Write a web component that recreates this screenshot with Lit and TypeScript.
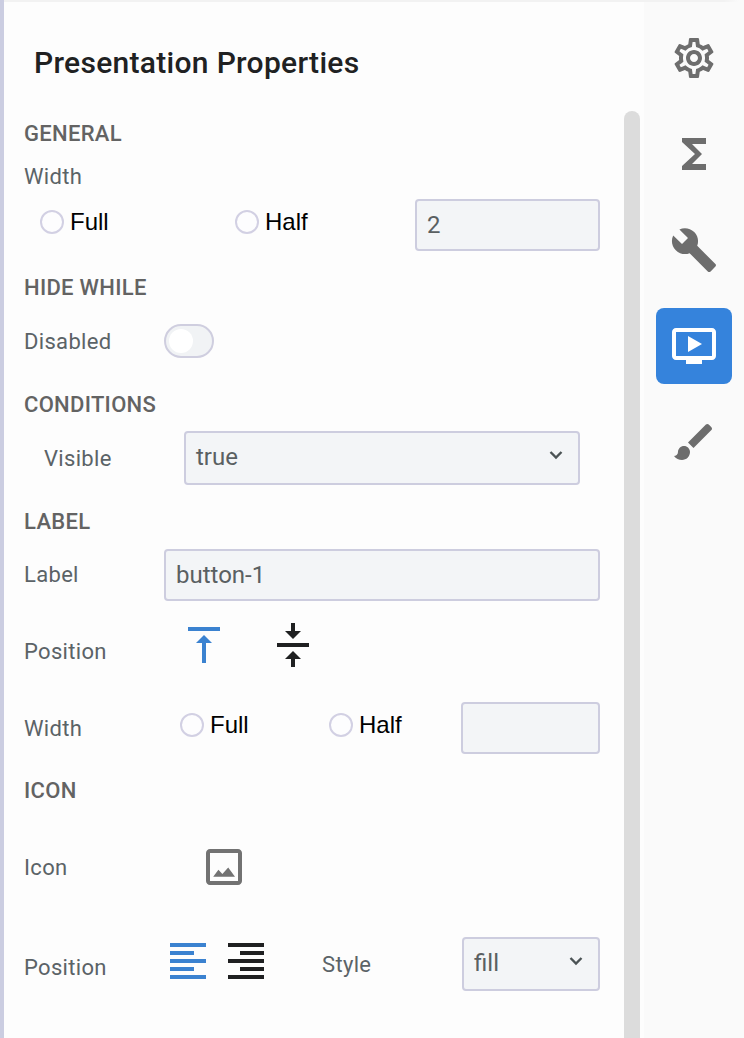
import { LitElement, html, css, svg } from "lit";
import { customElement, property } from "lit/decorators.js";

const ICONS: Record<string, string> = {
  settings:
    "M19.43 12.98c.04-.32.07-.64.07-.98 0-.34-.03-.66-.07-.98l2.11-1.65c.19-.15.24-.42.12-.64l-2-3.46c-.09-.16-.26-.25-.44-.25-.06 0-.12.01-.17.03l-2.49 1c-.52-.4-1.08-.73-1.69-.98l-.38-2.65C14.46 2.18 14.25 2 14 2h-4c-.25 0-.46.18-.49.42l-.38 2.65c-.61.25-1.17.59-1.69.98l-2.49-1c-.06-.02-.12-.03-.18-.03-.17 0-.34.09-.43.25l-2 3.46c-.13.22-.07.49.12.64l2.11 1.65c-.04.32-.07.65-.07.98 0 .33.03.66.07.98l-2.11 1.65c-.19.15-.24.42-.12.64l2 3.46c.09.16.26.25.44.25.06 0 .12-.01.17-.03l2.49-1c.52.4 1.08.73 1.69.98l.38 2.65c.03.24.24.42.49.42h4c.25 0 .46-.18.49-.42l.38-2.65c.61-.25 1.17-.59 1.69-.98l2.49 1c.06.02.12.03.18.03.17 0 .34-.09.43-.25l2-3.46c.12-.22.07-.49-.12-.64l-2.11-1.65zm-1.98-1.71c.04.31.05.52.05.73 0 .21-.02.43-.05.73l-.14 1.13.89.7 1.08.84-.7 1.21-1.27-.51-1.04-.42-.9.68c-.43.32-.84.56-1.25.73l-1.06.43-.16 1.13-.2 1.35h-1.4l-.19-1.35-.16-1.13-1.06-.43c-.43-.18-.83-.41-1.23-.71l-.91-.7-1.06.43-1.27.51-.7-1.21 1.08-.84.89-.7-.14-1.13c-.03-.31-.05-.54-.05-.74s.02-.43.05-.73l.14-1.13-.89-.7-1.08-.84.7-1.21 1.27.51 1.04.42.9-.68c.43-.32.84-.56 1.25-.73l1.06-.43.16-1.13.2-1.35h1.39l.19 1.35.16 1.13 1.06.43c.43.18.83.41 1.23.71l.91.7 1.06-.43 1.27-.51.7 1.21-1.07.85-.89.7.14 1.13zM12 8c-2.21 0-4 1.79-4 4s1.79 4 4 4 4-1.79 4-4-1.79-4-4-4zm0 6c-1.1 0-2-.9-2-2s.9-2 2-2 2 .9 2 2-.9 2-2 2z",
  functions: "M18 4H6v2l6.5 6L6 18v2h12v-3h-7l5-5-5-5h7z",
  build:
    "M22.7 19l-9.1-9.1c.9-2.3.4-5-1.5-6.9-2-2-5-2.4-7.4-1.3L9 6 6 9 1.6 4.7C.4 7.1.9 10.1 2.9 12.1c1.9 1.9 4.6 2.4 6.9 1.5l9.1 9.1c.4.4 1 .4 1.4 0l2.3-2.3c.5-.4.5-1.1.1-1.4z",
  video:
    "M21 3H3c-1.11 0-2 .89-2 2v12c0 1.1.89 2 2 2h5v2h8v-2h5c1.1 0 1.99-.9 1.99-2L23 5c0-1.11-.9-2-2-2zm0 14H3V5h18v12zm-5-6l-7 4V7z",
  brush:
    "M7 14c-1.66 0-3 1.34-3 3 0 1.31-1.16 2-2 2 .92 1.22 2.49 2 4 2 2.21 0 4-1.79 4-4 0-1.66-1.34-3-3-3zm13.71-9.37l-1.34-1.34c-.39-.39-1.02-.39-1.41 0L9 12.25 11.75 15l8.96-8.96c.39-.39.39-1.02 0-1.41z",
  alignTop: "M8 11h3v10h2V11h3l-4-4-4 4zM4 3v2h16V3H4z",
  alignCenter:
    "M8 19h3v4h2v-4h3l-4-4-4 4zm8-14h-3V1h-2v4H8l4 4 4-4zM4 11v2h16v-2H4z",
  picture:
    "M19 5v14H5V5h14m0-2H5c-1.1 0-2 .9-2 2v14c0 1.1.9 2 2 2h14c1.1 0 2-.9 2-2V5c0-1.1-.9-2-2-2zM6.6 16.9l2.6-3.5 2 2.1 2.9-3.3 3.4 4.7z",
  left: "M15 15H3v2h12v-2zm0-8H3v2h12V7zM3 13h18v-2H3v2zm0 8h18v-2H3v2zM3 3v2h18V3H3z",
  right: "M3 21h18v-2H3v2zm6-4h12v-2H9v2zm-6-4h18v-2H3v2zm6-4h12V7H9v2zM3 3v2h18V3H3z",
};

@customElement("ui-icon")
class UiIcon extends LitElement {
  @property() name = "";
  static styles = css`
    :host { display: block; width: 48px; height: 48px; flex: none; }
    svg { display: block; width: 100%; height: 100%; fill: currentColor; }
  `;
  render() {
    return html`<svg viewBox="0 0 24 24">${svg`<path d=${ICONS[this.name]}></path>`}</svg>`;
  }
}

@customElement("ui-radio")
class UiRadio extends LitElement {
  @property() label = "";
  static styles = css`
    :host {
      display: flex; align-items: center; gap: 6px; height: 28px;
      font: 24px/28px "Liberation Sans", Arial, sans-serif; color: #000;
    }
    .ring {
      box-sizing: border-box; width: 24px; height: 24px;
      border: 2px solid #d2d0e3; border-radius: 50%; background: #fdfdfe;
    }
  `;
  render() {
    return html`<span class="ring"></span><span>${this.label}</span>`;
  }
}

@customElement("ui-field")
class UiField extends LitElement {
  @property() value = "";
  @property({ type: Boolean }) dropdown = false;
  static styles = css`
    :host {
      box-sizing: border-box; display: flex; align-items: center;
      justify-content: space-between; height: 52px; padding: 0 10px;
      border: 2px solid #cdcddf; border-radius: 4px; background: #f3f5f7;
      font: 24px/28px Roboto, sans-serif; color: #5a6062;
    }
    :host([dropdown]) { height: 54px; padding: 0 15px 2px 10px; }
    .chevron {
      width: 14px; height: 10px; margin-top: -4px; fill: none;
      stroke: #4b5355; stroke-width: 2.4;
    }
  `;
  render() {
    return html`<span>${this.value}</span>${this.dropdown
        ? html`<svg class="chevron" viewBox="0 0 14 10"><path d="M1.5 2l5.5 5.5L12.5 2"></path></svg>`
        : ""}`;
  }
}

@customElement("app-root")
class AppRoot extends LitElement {
  static styles = css`
    :host {
      box-sizing: border-box; display: grid;
      grid-template-columns: 620px 16px 4px 1fr; grid-template-rows: 2px 1fr;
      height: 1038px; overflow: hidden; background: #fdfdfd;
      border-left: 4px solid #cbcde1; font-family: Roboto, sans-serif;
    }
    .edge { grid-column: 1 / -1; background: linear-gradient(90deg, #f2f2f2 720px, #fafafa 735px); }
    .panel { padding: 0 24px 0 20px; }
    .title {
      margin: 41px 0 0 10px; font-size: 30px; line-height: 40px;
      font-weight: 500; letter-spacing: 0.3px; color: #202122;
    }
    .heading {
      margin: 0; font-size: 22px; line-height: 26px; font-weight: 500;
      letter-spacing: 0.3px; color: #636363;
    }
    .general { margin-top: 38px; }
    .hide { margin-top: 24px; }
    .conditions { margin-top: 34px; }
    .labels { margin-top: 24px; }
    .icons { margin-top: 24px; }
    .row { display: grid; align-items: center; grid-template-columns: 140px 1fr; }
    .label {
      padding-top: 2px; font-size: 22px; line-height: 26px;
      letter-spacing: 0.32px; color: #5b6367;
    }
    .widthlabel { margin-top: 15px; }
    .widths { margin-top: 9px; padding-left: 16px; grid-template-columns: 195px 180px 1fr; }
    .widths ui-radio, .labelwidth ui-radio { margin-top: -6px; }
    .disabled { margin-top: 23px; height: 34px; }
    .toggle {
      box-sizing: border-box; display: flex; align-items: center; width: 50px; height: 34px;
      padding-left: 3px; border: 2px solid #cfcedf; border-radius: 17px; background: #f1f3f5;
    }
    .knob { width: 24px; height: 24px; border-radius: 50%; background: #fff; }
    .visible { margin: 13px 20px 0 20px; }
    .labeltext { margin-top: 14px; }
    .labeltext .label { padding-top: 0; }
    .position { margin-top: 20px; height: 48px; grid-template-columns: 156px 89px 48px; }
    .position .label { margin-top: 12px; }
    .labelwidth { margin-top: 33px; grid-template-columns: 156px 149px 132px 1fr; }
    .iconrow { margin-top: 39px; grid-template-columns: 176px 48px; }
    .align { margin-top: 46px; height: 54px; grid-template-columns: 140px 58px 100px 140px 1fr; }
    .align .label { margin-top: 5px; }
    .align ui-icon { margin-bottom: 6px; }
    .align .style { margin-top: 0; }
    .on { color: #3b82d0; }
    .off { color: #1f2021; }
    .grey { color: #727272; }
    .scroll { margin-top: 109px; border-radius: 8px 8px 0 0; background: #dcdcdc; }
    .rail {
      grid-column: 4; display: flex; flex-direction: column; gap: 20px; padding: 18px 12px;
      background: #fafafa; color: #6d6d6d;
    }
    .tool {
      display: flex; align-items: center; justify-content: center;
      height: 76px; flex: none; border-radius: 8px;
    }
    .active { background: #3583dc; color: #fff; }
  `;

  render() {
    const tools = ["settings", "functions", "build", "video", "brush"];
    return html`
      <div class="edge"></div>
      <main class="panel">
        <h1 class="title">Presentation Properties</h1>

        <h2 class="heading general">GENERAL</h2>
        <div class="label widthlabel">Width</div>
        <div class="row widths">
          <ui-radio label="Full"></ui-radio>
          <ui-radio label="Half"></ui-radio>
          <ui-field value="2"></ui-field>
        </div>

        <h2 class="heading hide">HIDE WHILE</h2>
        <div class="row disabled">
          <span class="label">Disabled</span>
          <span class="toggle"><span class="knob"></span></span>
        </div>

        <h2 class="heading conditions">CONDITIONS</h2>
        <div class="row visible">
          <span class="label">Visible</span>
          <ui-field dropdown value="true"></ui-field>
        </div>

        <h2 class="heading labels">LABEL</h2>
        <div class="row labeltext">
          <span class="label">Label</span>
          <ui-field value="button-1"></ui-field>
        </div>
        <div class="row position">
          <span class="label">Position</span>
          <ui-icon class="on" name="alignTop"></ui-icon>
          <ui-icon class="off" name="alignCenter"></ui-icon>
        </div>
        <div class="row labelwidth">
          <span class="label">Width</span>
          <ui-radio label="Full"></ui-radio>
          <ui-radio label="Half"></ui-radio>
          <ui-field></ui-field>
        </div>

        <h2 class="heading icons">ICON</h2>
        <div class="row iconrow">
          <span class="label">Icon</span>
          <ui-icon class="grey" name="picture"></ui-icon>
        </div>
        <div class="row align">
          <span class="label">Position</span>
          <ui-icon class="on" name="left"></ui-icon>
          <ui-icon class="off" name="right"></ui-icon>
          <span class="label style">Style</span>
          <ui-field dropdown value="fill"></ui-field>
        </div>
      </main>
      <div class="scroll"></div>
      <nav class="rail">
        ${tools.map(
          (t) => html`<div class="tool ${t === "video" ? "active" : ""}"><ui-icon name=${t}></ui-icon></div>`
        )}
      </nav>
    `;
  }
}
